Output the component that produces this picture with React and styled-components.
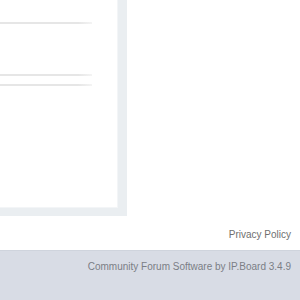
import React from "react";
import styled, { createGlobalStyle } from "styled-components";

const Global = createGlobalStyle`
  html, body { margin: 0; padding: 0; background: #fff; }
  body { font-family: "Liberation Sans", Arial, sans-serif; width: 300px; height: 300px; overflow: hidden; }
`;

const Page = styled.div`
  display: flex;
  flex-direction: column;
  width: 300px;
`;

const Frame = styled.div`
  width: 127px;
  height: 216px;
  box-sizing: border-box;
  background: #eaeef1;
  padding: 0 9px 8px 0;
  display: flex;
`;

const Panel = styled.div`
  flex: 1;
  background: #fff;
  border-right: 1px solid #f3f5f7;
  border-bottom: 1px solid #f3f5f7;
  padding-right: 25px;
  display: flex;
  flex-direction: column;
`;

const Rule = styled.div`
  height: 2px;
  margin-top: ${(p) => p.$top}px;
  background: linear-gradient(to right, #e6e6e6 85%, #f4f4f4);
`;

const Links = styled.div`
  display: flex;
  justify-content: flex-end;
  padding: 13px 9px 0 0;
  height: 34px;
  box-sizing: border-box;
  font-size: 10px;
  color: #6f6f6f;
`;

const Footer = styled.div`
  height: 50px;
  background: #d8dce5;
  border-top: 1px solid #cfd4dd;
  display: flex;
  justify-content: flex-end;
  padding: 10px 9px 0 0;
  box-sizing: border-box;
  font-size: 10px;
  color: #7b7e85;
`;

export default function App() {
  return (
    <>
      <Global />
      <Page>
        <Frame>
          <Panel>
            <Rule $top={22} />
            <Rule $top={50} />
            <Rule $top={8} />
          </Panel>
        </Frame>
        <Links>Privacy Policy</Links>
        <Footer>Community Forum Software by IP.Board 3.4.9</Footer>
      </Page>
    </>
  );
}
